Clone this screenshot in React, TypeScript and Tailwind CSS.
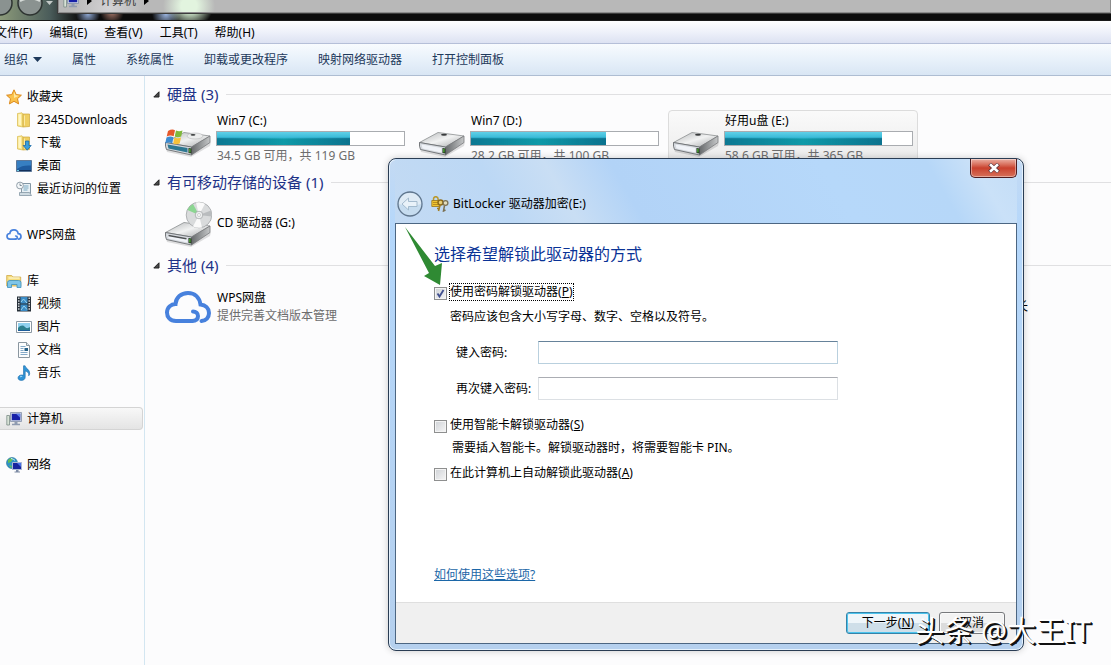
import { useState } from "react";
import type { ReactNode } from "react";

const menus = ["文件(F)", "编辑(E)", "查看(V)", "工具(T)", "帮助(H)"];
const commands = ["属性", "系统属性", "卸载或更改程序", "映射网络驱动器", "打开控制面板"];

function StarIcon() {
  return (
    <svg width="16" height="16" viewBox="0 0 16 16">
      <path
        d="M8 .8l2.2 4.8 5.2.6-3.9 3.5 1.1 5.2L8 12.3l-4.6 2.6 1.1-5.2L.6 6.2l5.2-.6z"
        fill="#fbc24b"
        stroke="#dc8a1e"
        strokeLinejoin="round"
      />
      <path d="M8 2.8l1.5 3.5 3.4.5L8 9z" fill="#ffe9a3" />
    </svg>
  );
}

function FolderIcon({ download = false }: { download?: boolean }) {
  return (
    <svg width="16" height="16" viewBox="0 0 16 16">
      <path d="M1.5 1.5L6 .8l1 1.200v13l-5.500-1z" fill="#f9e68e" stroke="#d9b94c" strokeWidth=".7" />
      <path d="M7 2h6.500v12.500L7 15z" fill="#efcf62" stroke="#cfa83c" strokeWidth=".7" />
      <path d="M2.500 2.300h2.500v11l-2.500-.5z" fill="#fff6c4" />
      <path d="M8.500 3.500v10" stroke="#fbe9a4" />
      {download && (
        <path
          d="M9.500 6h3.400v4.500h2.300L11.2 15.2 7.2 10.5h2.3z"
          fill="#3ba0dc"
          stroke="#1a69a8"
          strokeWidth=".8"
        />
      )}
    </svg>
  );
}

function DesktopIcon() {
  return (
    <svg width="16" height="16" viewBox="0 0 16 16">
      <path d="M.5 2.5h15v11H.5z" fill="#1f5b9f" stroke="#5c7798" />
      <path d="M1 3h14v4.5C9 7 5 8 1 11z" fill="#377fc2" />
      <path d="M1 12.5h14" stroke="#122f5a" />
      <path d="M1 12.5h2" stroke="#6fd0e8" />
    </svg>
  );
}

function RecentIcon() {
  return (
    <svg width="16" height="16" viewBox="0 0 16 16">
      <path d="M5.5 2.5h9v10h-9z" fill="#e8f0f5" stroke="#8497a5" />
      <path d="M7.5 5h5M7.5 7h5M7.5 9h4" stroke="#78a8c2" />
      <path d="M3.5 11.500h10l2 3h-12z" fill="#cfdbe2" stroke="#8497a5" strokeWidth=".8" />
      <circle cx="4" cy="4.500" r="3.400" fill="#f4f7f9" stroke="#93a0aa" />
      <path d="M4 2.500v2h1.800" fill="none" stroke="#667785" strokeWidth=".8" />
    </svg>
  );
}

function CloudIcon({ large = false }: { large?: boolean }) {
  return (
    <svg
      width={large ? 48 : 16}
      height={large ? 34 : 13}
      viewBox="0 0 48 34"
      fill="none"
      stroke="#4781dd"
      strokeWidth={large ? 4 : 5}
      strokeLinecap="round"
      className="shrink-0"
    >
      <path d="M28 31H12C6 31 3 27 3 22.500c0-5 4-8.500 8.500-8.500C12 7.500 17 3 24 3c7 0 11.500 4.500 12.500 11.500 5 .5 8.500 4 8.500 8.500 0 4.500-3 7.500-7.500 8" />
      <path d="M28 31c4 0 6-2 6-5 0-2.500-2-4.500-5-4.500" />
    </svg>
  );
}

function LibraryIcon() {
  return (
    <svg width="16" height="16" viewBox="0 0 16 16">
      <path d="M.7 2.500h5l1.500 1.500h7.500v9H.7z" fill="#f5dc7d" stroke="#cfa94a" strokeWidth=".8" />
      <path d="M2.500 5h11" stroke="#fffbe0" />
      <path d="M1.500 14.500V9.500Q1.500 7.500 4 7.500h8.500q2.500 0 2.500 2v5h-4v-3H5.500v3z" fill="#7ec5e8" stroke="#3c8fbe" strokeWidth=".8" />
    </svg>
  );
}

function VideoIcon() {
  return (
    <svg width="16" height="16" viewBox="0 0 16 16">
      <path d="M1 .5h14v15H1z" fill="#273039" />
      <path d="M4.500 1h7v6.500h-7zM4.500 8.500h7V15h-7z" fill="#3a8ac4" />
      <path d="M5 6l2.500-3L11 7M5 14l3-4 3 3.500" stroke="#9bd5ec" fill="none" />
      <path d="M2.800 1.500v13.500M13.200 1.500v13.500" stroke="#e8eef2" strokeWidth="1.300" strokeDasharray="1.500 1.200" />
    </svg>
  );
}

function PictureIcon() {
  return (
    <svg width="16" height="16" viewBox="0 0 16 16">
      <path d="M.5 2.500h15v11H.5z" fill="#fff" stroke="#8b98a3" />
      <path d="M2 4h12v8H2z" fill="#8fd0ee" />
      <path d="M2 9c3-3 5-3 7-1s3 1 5 0v4H2z" fill="#2b7f8e" />
      <path d="M2 11h12v1H2z" fill="#1d5c9a" />
    </svg>
  );
}

function DocumentIcon() {
  return (
    <svg width="16" height="16" viewBox="0 0 16 16">
      <path d="M2.500.5h8l3 3v12h-11z" fill="#fbfcfd" stroke="#8a96a0" />
      <path d="M10.500.5v3h3" fill="#dde5ea" stroke="#8a96a0" />
      <path d="M4.500 4.500h5M4.500 6.500h3M4.500 8.500h3M4.500 10.500h7M4.500 12.500h7" stroke="#84a9c8" />
      <path d="M8.500 6h3.500v3H8.500z" fill="#245f86" />
    </svg>
  );
}

function MusicIcon() {
  return (
    <svg width="16" height="16" viewBox="0 0 16 16">
      <path
        d="M7.500.8h1.600c.3 2.800 5 3.400 4.600 8-.1.800-.6 1.600-1 2 .6-3-1.300-4.200-3.500-4.800v6.200c0 2-1.600 3.200-3.800 3.200-2 0-3.400-.9-3.400-2.500 0-1.800 1.800-2.900 3.800-2.900.7 0 1.300.1 1.700.3z"
        fill="#2f93d6"
        stroke="#1b6cab"
        strokeWidth=".6"
      />
      <path d="M4 12c.5-.6 1.500-.8 2.200-.6" stroke="#a8dcf7" fill="none" />
    </svg>
  );
}

function ComputerIcon() {
  return (
    <svg width="16" height="16" viewBox="0 0 16 16" className="shrink-0">
      <path d="M.8 4.500h2.700v9.500H.8z" fill="#d8e3d6" stroke="#7b8c86" strokeWidth=".8" />
      <path d="M4.500 1.500h11v9h-11z" fill="#c9d3e2" stroke="#8490a8" strokeWidth=".8" />
      <path d="M5.800 2.800h8.400v6.400H5.800z" fill="#1620a8" />
      <path d="M10 2.800h4.200v4z" fill="#5878ea" />
      <path d="M8.500 10.800h3v2h2.500v1.500H6v-1.500h2.500z" fill="#8f9bb0" />
    </svg>
  );
}

function NetworkIcon() {
  return (
    <svg width="16" height="16" viewBox="0 0 16 16">
      <circle cx="6" cy="6" r="5.500" fill="#2f93c6" stroke="#1f6f95" strokeWidth=".6" />
      <path d="M2 3c2-2 4-2 5-1L5 5l-3 1zM3 8l3 1-1 2.300z" fill="#62bd55" />
      <path d="M5 1.500c2 .5 3 1 4 2" stroke="#d4f1fa" fill="none" />
      <path d="M6.500 5.500h9v7h-9z" fill="#16249e" stroke="#a9b7d4" />
      <path d="M11 6h4v4z" fill="#4a72e8" />
      <path d="M10 13h2.500v1.500H14v1H8.500v-1H10z" fill="#7c8aa4" />
    </svg>
  );
}

function DriveIcon({ kind = "disk" }: { kind?: "disk" | "system" | "cd" }) {
  return (
    <svg width="48" height="46" viewBox="0 0 48 46" className="shrink-0">
      <defs>
        <linearGradient id={`top-${kind}`} x1="0" y1="0" x2="1" y2="1">
          <stop offset="0" stopColor="#b4b6b8" />
          <stop offset=".5" stopColor="#f1f2f2" />
          <stop offset="1" stopColor="#a5a7a9" />
        </linearGradient>
        <linearGradient id={`side-${kind}`} x1="0" y1="0" x2="1" y2="0">
          <stop offset="0" stopColor="#676a6c" />
          <stop offset="1" stopColor="#c5c7c8" />
        </linearGradient>
      </defs>
      <path d="M2 38l24 6 21-13-1 4-19 11-24-5z" fill="#000" opacity=".12" />
      <path d="M1.500 31.500L20 21.500l26 3.500-18.500 11z" fill={`url(#top-${kind})`} stroke="#8c8f91" strokeWidth=".8" />
      <path d="M27.500 36L46 25v6.500L27.500 44z" fill={`url(#side-${kind})`} stroke="#77797b" strokeWidth=".8" />
      <path d="M1.500 31.500l26 4.500v8l-25-5.500q-1.500-3-1-7z" fill="#d5d9de" stroke="#696c6f" strokeWidth=".9" />
      <path d="M3.500 33.500l20 3.600v4.400L4.500 37.500z" fill={kind === "system" ? "#2d7791" : "#f0f3f8"} />
      <path d="M24.500 37l3 .5v5l-3-.6z" fill="#1d281b" />
      <path d="M25.900 37.800v3.600" stroke="#59c43c" strokeWidth="1.200" />
      {kind === "disk" && <ellipse cx="26" cy="23.800" rx="3" ry="1" fill="#393b3c" />}
      {kind === "system" && (
        <>
          <ellipse cx="31" cy="25" rx="8" ry="3" fill="#eceded" stroke="#b5b7b8" strokeWidth=".6" />
          <ellipse cx="29" cy="23.800" rx="2.500" ry=".9" fill="#393b3c" />
          <path d="M4 20q4-2.500 7-.8l-1.300 6q-3.500-1.400-7 .4z" fill="#e5582b" />
          <path d="M12 19.600q3 1.500 6.500 0l-1.300 6q-3.500 1.500-6.500 0z" fill="#7fb83b" />
          <path d="M2.500 26.600q3.500-2 7-.4l-1.300 6q-3.500-1.600-7 .2z" fill="#3d8bd0" />
          <path d="M10.500 26.600q3 1.500 6.500 0l-1.300 6q-3.500 1.500-6.500 0z" fill="#f6c13a" />
        </>
      )}
      {kind === "cd" && (
        <>
          <path d="M4.500 34.500l18 3.300" stroke="#4f5254" strokeWidth="1.400" />
          <circle cx="35" cy="14" r="12.800" fill="#d9dbdc" stroke="#a2a5a7" strokeWidth=".8" />
          <path d="M35 14L23.500 9A13 13 0 0 1 29 3z" fill="#78d47f" opacity=".8" />
          <path d="M35 14L32 1.500A13 13 0 0 1 41 2.700zM35 14l3 12.400a13 13 0 0 1-9-.9z" fill="#fafafa" />
          <path d="M35 14l12-4.500a13 13 0 0 1 .6 6z" fill="#b9bcbe" />
          <circle cx="35" cy="14" r="3.800" fill="#eef0f0" stroke="#9c9fa1" strokeWidth=".7" />
          <circle cx="35" cy="14" r="1.500" fill="#fff" stroke="#a6a8aa" strokeWidth=".5" />
        </>
      )}
    </svg>
  );
}

function KeysIcon() {
  return (
    <svg width="18" height="16" viewBox="0 0 18 16">
      <path d="M2.500 5V3a2.300 2.300 0 0 1 4.600 0V5" fill="none" stroke="#b9982c" strokeWidth="1.500" />
      <path d="M.8 4.500h8v6h-8z" fill="#f2c530" stroke="#98751a" strokeWidth=".8" />
      <path d="M2 6.500h5.500M2 8.500h5.500" stroke="#b98e1f" />
      <circle cx="9.500" cy="6.500" r="2.500" fill="#e9cf76" stroke="#8f6c19" strokeWidth="1.500" />
      <path d="M9 9l-1.500 6M8 12.500H6" stroke="#a37d20" strokeWidth="1.600" />
      <circle cx="14.500" cy="7" r="2.400" fill="#e4ddbc" stroke="#7c7255" strokeWidth="1.300" />
      <path d="M13.500 9.500l-1 5.500 2-1" fill="none" stroke="#7c7255" strokeWidth="1.500" />
    </svg>
  );
}

interface NavItem {
  label: string;
  icon: ReactNode;
  child?: boolean;
  selected?: boolean;
}

const navGroups: NavItem[][] = [
  [
    { label: "收藏夹", icon: <StarIcon /> },
    { label: "2345Downloads", icon: <FolderIcon />, child: true },
    { label: "下载", icon: <FolderIcon download />, child: true },
    { label: "桌面", icon: <DesktopIcon />, child: true },
    { label: "最近访问的位置", icon: <RecentIcon />, child: true },
  ],
  [{ label: "WPS网盘", icon: <CloudIcon /> }],
  [
    { label: "库", icon: <LibraryIcon /> },
    { label: "视频", icon: <VideoIcon />, child: true },
    { label: "图片", icon: <PictureIcon />, child: true },
    { label: "文档", icon: <DocumentIcon />, child: true },
    { label: "音乐", icon: <MusicIcon />, child: true },
  ],
  [{ label: "计算机", icon: <ComputerIcon />, selected: true }],
  [{ label: "网络", icon: <NetworkIcon /> }],
];

function Sidebar() {
  return (
    <nav className="flex w-[145px] shrink-0 flex-col gap-[23px] border-r border-[#d3e6f1] pr-px pt-[9px]">
      {navGroups.map((group) => (
        <ul key={group[0].label}>
          {group.map((item) => (
            <li key={item.label}>
              <button
                className={`flex h-[23px] w-full items-center gap-[5px] whitespace-nowrap rounded-r-sm border border-l-0 ${
                  item.child ? "pl-4" : "pl-1.5"
                } ${
                  item.selected
                    ? "border-[#d4d4d4] bg-linear-to-b from-[#f8f8f8] to-[#e4e4e4]"
                    : "border-transparent"
                }`}
              >
                {item.icon}
                {item.label}
              </button>
            </li>
          ))}
        </ul>
      ))}
    </nav>
  );
}

function Group({ title, children }: { title: string; children: ReactNode }) {
  return (
    <section className="mb-[5px]">
      <h2 className="mb-[3px] flex h-[26px] items-center text-[15px] text-[#1e3287]">
        <svg width="7" height="7" viewBox="0 0 7 7" className="mr-[7px]">
          <path d="M6 .8V6H.8z" fill="#4a4a4a" stroke="#222" />
        </svg>
        {title}
        <span className="ml-2 h-px flex-1 bg-[#e0e0e2]" />
      </h2>
      <div className="flex gap-1 pl-[7px]">{children}</div>
    </section>
  );
}

interface DriveProps {
  name: string;
  usage: string;
  percent: number;
  kind?: "disk" | "system";
  selected?: boolean;
}

function Drive({ name, usage, percent, kind, selected }: DriveProps) {
  return (
    <div
      className={`flex h-[54px] w-[250px] gap-1 rounded-sm border pl-[3px] pr-1 ${
        selected ? "border-[#dcdcdc] bg-linear-to-b from-[#fafafa] to-[#ebebeb]" : "border-transparent"
      }`}
    >
      <DriveIcon kind={kind} />
      <div className="min-w-0 flex-1">
        <p className="h-5 pl-px">{name}</p>
        <div className="h-[15px] border border-[#a9acb0] bg-white">
          <div
            className="h-full bg-linear-to-b from-[#5fd0e8] from-0% via-[#35b9d6] via-45% to-[#0f98a8] to-55%"
            style={{ width: `${percent}%` }}
          >
            <div className="h-full bg-linear-to-r from-[#0b6384]/60 via-[#0fa2a8]/20 to-[#0b6384]/70 mask-t-from-50% mask-t-to-60%" />
          </div>
        </div>
        <p className="pl-px text-[#6d6d6d]">{usage}</p>
      </div>
    </div>
  );
}

function CheckOption({
  label,
  accessKey,
  focused = false,
  defaultChecked = false,
}: {
  label: string;
  accessKey: string;
  focused?: boolean;
  defaultChecked?: boolean;
}) {
  const [checked, setChecked] = useState(defaultChecked);

  return (
    <label className="flex h-5 w-fit items-center gap-0.5">
      <span className="relative mt-0.5 size-[13px]">
        <input
          type="checkbox"
          checked={checked}
          onChange={(e) => setChecked(e.target.checked)}
          className="block size-[13px] appearance-none border border-[#8e8f8f] bg-linear-to-br from-[#cfd2d6] to-[#f6f6f6] shadow-[inset_0_0_0_1px_#f4f4f4]"
        />
        {checked && (
          <svg width="13" height="13" viewBox="0 0 13 13" className="pointer-events-none absolute inset-0">
            <path d="M3.500 6.500L5.500 9.500 9.500 3" fill="none" stroke="#41508f" strokeWidth="1.800" />
          </svg>
        )}
      </span>
      <span className={`h-[18px] border leading-4 ${focused ? "border-dotted border-black" : "border-transparent"}`}>
        {label}(<u>{accessKey}</u>)
      </span>
    </label>
  );
}

function BitLockerDialog() {
  return (
    <div
      role="dialog"
      aria-labelledby="dialog-title"
      className="absolute left-[388px] top-[158px] w-[636px] rounded-lg border border-[#2a3d54] bg-linear-to-b from-[#c4daf3] via-[#b4d7fb] via-15% to-[#b5d0ee] px-1.5 pb-1.5 shadow-[inset_0_0_0_1px_#e4f1fd,0_0_7px_#0003]"
    >
      <header className="flex h-16 items-start bg-[linear-gradient(60deg,#c3daf3_0%,#bcd8f5_18%,#c9def4_28%,#b2d3f7_38%,#b6d8fa_70%,#b6d7f8_86%,#cae1f8_93%,#c3ddf7_100%)]">
        <div className="flex flex-1 items-center pt-8">
          <button aria-label="后退" className="ml-0.5">
            <svg width="26" height="26" viewBox="0 0 26 26">
              <circle cx="13" cy="13" r="12" fill="#c6dcef" stroke="#60768d" strokeWidth="1.300" />
              <path d="M2 13a11 11 0 0 1 22 0q-11 4-22 0z" fill="#dfebf5" />
              <path d="M5 13l6.500-6v3.500H20v5h-8.500V19z" fill="#e9f2f9" stroke="#9db5ca" strokeWidth=".9" strokeLinejoin="round" />
            </svg>
          </button>
          <span className="ml-2 mr-1">
            <KeysIcon />
          </span>
          <h1 id="dialog-title">BitLocker 驱动器加密(E:)</h1>
        </div>
        <button
          aria-label="关闭"
          className="flex h-[19px] w-[47px] items-center justify-center rounded-b-[5px] border border-t-0 border-[#4d1c20] bg-linear-to-b from-[#eab0a4] from-0% via-[#c9402d] via-50% to-[#d6705a] shadow-[inset_0_0_0_1px_#ffffff66]"
        >
          <svg width="12" height="10" viewBox="0 0 12 10">
            <path d="M1.500 1l9 8M10.500 1l-9 8" stroke="#5a3038" strokeWidth="4" />
            <path d="M2 1.200l8 7.600M10 1.200l-8 7.600" stroke="#fff" strokeWidth="2.600" />
          </svg>
        </button>
      </header>

      <form className="border border-[#4c6682] bg-white" onSubmit={(e) => e.preventDefault()}>
        <div className="flex min-h-[378px] flex-col items-start pb-[17px] pl-[38px] pt-5">
          <h2 className="text-base/5 text-[#0a3396]">选择希望解锁此驱动器的方式</h2>

          <div className="mt-[18px]">
            <CheckOption label="使用密码解锁驱动器" accessKey="P" defaultChecked focused />
          </div>
          <p className="mt-[5px] pl-4">密码应该包含大小写字母、数字、空格以及符号。</p>

          <div className="mt-3.5 grid grid-cols-[82px_300px] gap-y-[13px] pl-[22px]">
            <label htmlFor="password" className="leading-[23px]">
              键入密码:
            </label>
            <input
              id="password"
              type="password"
              className="h-[23px] border border-[#b9d0de] border-t-[#66829a] bg-white px-1 outline-none"
            />
            <label htmlFor="confirm" className="leading-[23px]">
              再次键入密码:
            </label>
            <input
              id="confirm"
              type="password"
              className="h-[23px] border border-[#dce0e4] border-t-[#abadb3] bg-white px-1 outline-none"
            />
          </div>

          <div className="mt-[15px]">
            <CheckOption label="使用智能卡解锁驱动器" accessKey="S" />
          </div>
          <p className="mt-[3px] pl-[18px]">需要插入智能卡。解锁驱动器时，将需要智能卡 PIN。</p>
          <div className="mt-[5px]">
            <CheckOption label="在此计算机上自动解锁此驱动器" accessKey="A" />
          </div>

          <a href="#help" className="mt-auto text-[#1c67a8] underline">
            如何使用这些选项?
          </a>
        </div>

        <footer className="flex h-[41px] items-center justify-end gap-[9px] border-t border-[#dfdfdf] bg-[#f0f0f0] pr-[11px]">
          <button className="h-[22px] w-[84px] rounded-[3px] border border-[#3683a8] bg-linear-to-b from-[#eff6fa] from-50% to-[#cfdfe9] to-50% leading-5 shadow-[inset_0_0_0_1px_#4cc4ee]">
            下一步(<u>N</u>)
          </button>
          <button
            type="button"
            className="h-[22px] w-[66px] rounded-[3px] border border-[#77797c] bg-linear-to-b from-[#f3f3f3] from-50% to-[#dcdcdc] to-50% leading-5 shadow-[inset_0_0_0_1px_#fafafa]"
          >
            取消
          </button>
        </footer>
      </form>

      <svg
        width="40"
        height="61"
        viewBox="0 0 40 61"
        className="pointer-events-none absolute left-[15px] top-[67px]"
      >
        <path d="M1 1L31 40l7-3-2 22-16-9 5-3z" fill="#2f8a33" />
      </svg>
    </div>
  );
}

export default function App() {
  return (
    <div className="relative flex h-screen flex-col overflow-hidden bg-[#fcfcfd] font-['Noto_Sans','Noto_Sans_CJK_SC',sans-serif] text-xs/5 text-black">
      <header className="flex h-[21px] shrink-0 items-end overflow-hidden border-b border-[#1a1a1a] bg-[#0c0c0c] bg-[radial-gradient(circle_at_190px_4px,#d8f2d4_0_8px,transparent_24px),radial-gradient(circle_at_166px_14px,#9db7e2_0,transparent_14px),radial-gradient(circle_at_88px_14px,#8fa9d4_0,transparent_12px),radial-gradient(circle_at_112px_12px,#a8786a_0,transparent_12px),linear-gradient(90deg,#8c9a7a,#4a5c5a_50px,transparent_80px)]">
        <div className="mb-1 flex items-center gap-1 self-end">
          <svg width="56" height="26" viewBox="0 0 56 26" className="-mb-0.5">
            <circle cx="0" cy="11" r="12" fill="#8a9290" stroke="#2d3331" strokeWidth="1.500" />
            <circle cx="30" cy="11" r="12" fill="#8a9290" stroke="#2d3331" strokeWidth="1.500" />
            <path d="M20 9q10-5 20 0" stroke="#d6dbd8" fill="none" strokeWidth="2" />
            <path d="M46 9h7l-3.500 4z" fill="#c3c9c7" />
          </svg>
        </div>
        <div className="mb-[7px] ml-0.5 flex h-6 flex-1 items-center gap-2 border border-[#8c8c8c] bg-[#b8b8b8] bg-[radial-gradient(circle_at_130px_16px,#e2f4df_0_8px,transparent_26px),radial-gradient(circle_at_50px_18px,#d3d2d4_0,transparent_36px)] pl-1 text-[#3c3c3c] shadow-[0_0_0_1px_#3c3c3c]">
          <ComputerIcon />
          <svg width="5" height="8" viewBox="0 0 5 8">
            <path d="M0 0l5 4-5 4z" fill="#000" />
          </svg>
          <span>计算机</span>
          <svg width="5" height="8" viewBox="0 0 5 8">
            <path d="M0 0l5 4-5 4z" fill="#000" />
          </svg>
        </div>
      </header>

      <div className="-ml-[5px] flex h-[23px] shrink-0 items-center gap-[17px] border-b border-[#b5bfd8] bg-linear-to-b from-white via-[#eef1fa] to-[#dde2f2] pt-px">
        {menus.map((menu) => (
          <button key={menu}>{menu}</button>
        ))}
      </div>

      <div className="flex h-8 shrink-0 items-center gap-[30px] border-b border-[#aebdd2] bg-linear-to-b from-[#f8fbfe] via-[#e8f1fa] to-[#d9e6f4] pl-1 text-[#1e395b]">
        <button className="flex items-center gap-[5px]">
          组织
          <svg width="9" height="5" viewBox="0 0 9 5">
            <path d="M0 0h9L4.500 5z" fill="#1e395b" />
          </svg>
        </button>
        {commands.map((command) => (
          <button key={command}>{command}</button>
        ))}
      </div>

      <div className="flex min-h-0 flex-1">
        <Sidebar />
        <main className="min-w-0 flex-1 overflow-hidden whitespace-nowrap pl-2 pt-[5px]">
          <Group title="硬盘 (3)">
            <Drive name="Win7 (C:)" usage="34.5 GB 可用，共 119 GB" percent={71} kind="system" />
            <Drive name="Win7 (D:)" usage="28.2 GB 可用，共 100 GB" percent={72} />
            <Drive name="好用u盘 (E:)" usage="58.6 GB 可用，共 365 GB" percent={84} selected />
          </Group>
          <Group title="有可移动存储的设备 (1)">
            <div className="flex h-[49px] items-end gap-[5px] pl-1">
              <DriveIcon kind="cd" />
              <span className="mb-3.5">CD 驱动器 (G:)</span>
            </div>
          </Group>
          <Group title="其他 (4)">
            <div className="grid flex-1 grid-cols-[repeat(3,254px)_106px]">
              <div className="col-span-3 flex h-[52px] items-center gap-[5px] pl-1">
                <CloudIcon large />
                <div className="leading-[18px]">
                  <p>WPS网盘</p>
                  <p className="text-[#6d6d6d]">提供完善文档版本管理</p>
                </div>
              </div>
              <div className="flex items-center justify-end">长</div>
            </div>
          </Group>
        </main>
      </div>

      <BitLockerDialog />

      <p className="pointer-events-none absolute bottom-4 right-5 text-[29px]/9 text-white [text-shadow:2px_2px_0_#111,1px_1px_0_#111]">
        头条 @大王IT
      </p>
    </div>
  );
}
